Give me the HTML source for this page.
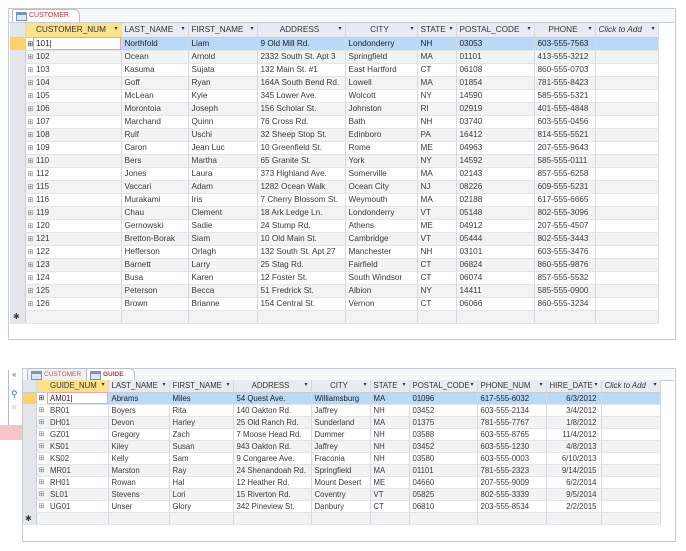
<!DOCTYPE html>
<html><head><meta charset="utf-8"><style>
body{margin:0;width:686px;height:551px;background:#fff;position:relative;overflow:hidden;font-family:"Liberation Sans",sans-serif;}
.frame{position:absolute;border:1px solid #c5cbd3;background:#fff;}
.tabbar{position:absolute;background:#f7f8fa;border-bottom:1px solid #c9ced6;}
.tab{position:absolute;height:12px;font-size:7px;color:#b0363e;line-height:12px;padding-left:16px;padding-right:10px;background:#fff;border:1px solid #b7bec8;border-bottom:none;border-radius:2px 6px 0 0}
.tab i{position:absolute;left:3px;top:2px;width:9px;height:7px;border:1px solid #7d93b5;background:linear-gradient(#7d93b5 0 2px,#dfe7f3 2px)}
table{position:absolute;border-collapse:collapse;table-layout:fixed;font-size:8.2px;color:#3a3a3a}
td,th{padding:0 0 0 3px;white-space:nowrap;overflow:hidden;border-right:1px solid #d6dae0;border-bottom:1px solid #e1e4e8}
th{background:#e8ecf2;font-weight:normal;color:#333;text-align:left;border-bottom:1px solid #c9ced6}
th.s{background:#fbe28c}
th span{float:right;padding-right:3px;font-size:6px}
td.sel{background:#e4e6ea;border-right:1px solid #c9ced6}
td.ex{border-right:none;color:#777;font-size:7px;padding:0 0 0 2px}
tr.alt td{background:#f3f3f3}
tr.alt td.sel{background:#e4e6ea}
tr.cur td{background:#b9d9f6;color:#222}
tr.cur td.sel{background:#fcd36b}
tr.cur td.box{background:#fff;outline:1px solid #f0a0a8;outline-offset:-1px}
tr.cur td.ex{background:#fff}
td.r{text-align:right;padding-right:4px}
</style></head><body>

<div class="frame" style="left:8px;top:8px;width:666px;height:330px"></div>
<div class="tabbar" style="left:9px;top:9px;width:665px;height:13px"></div>
<div class="tab" style="left:12px;top:9px;">CUSTOMER<i></i></div>

<table style="left:10px;top:23px;width:648px">
<colgroup><col style="width:15px"><col style="width:8px"><col style="width:88px"><col style="width:67px"><col style="width:69px"><col style="width:88px"><col style="width:72px"><col style="width:39px"><col style="width:78px"><col style="width:61px"><col style="width:63px"></colgroup>
<tr style="height:14px"><th style="background:#e4e6ea"></th><th class="s" style="border-right:none"></th><th class="s">CUSTOMER_NUM<span>▾</span></th><th>LAST_NAME<span>▾</span></th><th>FIRST_NAME<span>▾</span></th><th style="text-align:center">ADDRESS<span>▾</span></th><th style="text-align:center">CITY<span>▾</span></th><th>STATE<span>▾</span></th><th>POSTAL_CODE<span>▾</span></th><th style="text-align:center">PHONE<span>▾</span></th><th><em>Click to Add</em><span>▾</span></th></tr>
<tr class="cur" style="height:13px"><td class="sel"></td><td class="ex">⊞</td><td class="box">101|</td><td>Northfold</td><td>Liam</td><td>9 Old Mill Rd.</td><td>Londonderry</td><td>NH</td><td>03053</td><td>603-555-7563</td><td></td></tr>
<tr class="alt" style="height:13px"><td class="sel"></td><td class="ex">⊞</td><td>102</td><td>Ocean</td><td>Arnold</td><td>2332 South St. Apt 3</td><td>Springfield</td><td>MA</td><td>01101</td><td>413-555-3212</td><td></td></tr>
<tr style="height:13px"><td class="sel"></td><td class="ex">⊞</td><td>103</td><td>Kasuma</td><td>Sujata</td><td>132 Main St. #1</td><td>East Hartford</td><td>CT</td><td>06108</td><td>860-555-0703</td><td></td></tr>
<tr class="alt" style="height:13px"><td class="sel"></td><td class="ex">⊞</td><td>104</td><td>Goff</td><td>Ryan</td><td>164A South Bend Rd.</td><td>Lowell</td><td>MA</td><td>01854</td><td>781-555-8423</td><td></td></tr>
<tr style="height:13px"><td class="sel"></td><td class="ex">⊞</td><td>105</td><td>McLean</td><td>Kyle</td><td>345 Lower Ave.</td><td>Wolcott</td><td>NY</td><td>14590</td><td>585-555-5321</td><td></td></tr>
<tr class="alt" style="height:13px"><td class="sel"></td><td class="ex">⊞</td><td>106</td><td>Morontoia</td><td>Joseph</td><td>156 Scholar St.</td><td>Johnston</td><td>RI</td><td>02919</td><td>401-555-4848</td><td></td></tr>
<tr style="height:13px"><td class="sel"></td><td class="ex">⊞</td><td>107</td><td>Marchand</td><td>Quinn</td><td>76 Cross Rd.</td><td>Bath</td><td>NH</td><td>03740</td><td>603-555-0456</td><td></td></tr>
<tr class="alt" style="height:13px"><td class="sel"></td><td class="ex">⊞</td><td>108</td><td>Rulf</td><td>Uschi</td><td>32 Sheep Stop St.</td><td>Edinboro</td><td>PA</td><td>16412</td><td>814-555-5521</td><td></td></tr>
<tr style="height:13px"><td class="sel"></td><td class="ex">⊞</td><td>109</td><td>Caron</td><td>Jean Luc</td><td>10 Greenfield St.</td><td>Rome</td><td>ME</td><td>04963</td><td>207-555-9643</td><td></td></tr>
<tr class="alt" style="height:13px"><td class="sel"></td><td class="ex">⊞</td><td>110</td><td>Bers</td><td>Martha</td><td>65 Granite St.</td><td>York</td><td>NY</td><td>14592</td><td>585-555-0111</td><td></td></tr>
<tr style="height:13px"><td class="sel"></td><td class="ex">⊞</td><td>112</td><td>Jones</td><td>Laura</td><td>373 Highland Ave.</td><td>Somerville</td><td>MA</td><td>02143</td><td>857-555-6258</td><td></td></tr>
<tr class="alt" style="height:13px"><td class="sel"></td><td class="ex">⊞</td><td>115</td><td>Vaccari</td><td>Adam</td><td>1282 Ocean Walk</td><td>Ocean City</td><td>NJ</td><td>08226</td><td>609-555-5231</td><td></td></tr>
<tr style="height:13px"><td class="sel"></td><td class="ex">⊞</td><td>116</td><td>Murakami</td><td>Iris</td><td>7 Cherry Blossom St.</td><td>Weymouth</td><td>MA</td><td>02188</td><td>617-555-6665</td><td></td></tr>
<tr class="alt" style="height:13px"><td class="sel"></td><td class="ex">⊞</td><td>119</td><td>Chau</td><td>Clement</td><td>18 Ark Ledge Ln.</td><td>Londonderry</td><td>VT</td><td>05148</td><td>802-555-3096</td><td></td></tr>
<tr style="height:13px"><td class="sel"></td><td class="ex">⊞</td><td>120</td><td>Gernowski</td><td>Sadie</td><td>24 Stump Rd.</td><td>Athens</td><td>ME</td><td>04912</td><td>207-555-4507</td><td></td></tr>
<tr class="alt" style="height:13px"><td class="sel"></td><td class="ex">⊞</td><td>121</td><td>Bretton-Borak</td><td>Siam</td><td>10 Old Main St.</td><td>Cambridge</td><td>VT</td><td>05444</td><td>802-555-3443</td><td></td></tr>
<tr style="height:13px"><td class="sel"></td><td class="ex">⊞</td><td>122</td><td>Hefferson</td><td>Orlagh</td><td>132 South St. Apt 27</td><td>Manchester</td><td>NH</td><td>03101</td><td>603-555-3476</td><td></td></tr>
<tr class="alt" style="height:13px"><td class="sel"></td><td class="ex">⊞</td><td>123</td><td>Barnett</td><td>Larry</td><td>25 Stag Rd.</td><td>Fairfield</td><td>CT</td><td>06824</td><td>860-555-9876</td><td></td></tr>
<tr style="height:13px"><td class="sel"></td><td class="ex">⊞</td><td>124</td><td>Busa</td><td>Karen</td><td>12 Foster St.</td><td>South Windsor</td><td>CT</td><td>06074</td><td>857-555-5532</td><td></td></tr>
<tr class="alt" style="height:13px"><td class="sel"></td><td class="ex">⊞</td><td>125</td><td>Peterson</td><td>Becca</td><td>51 Fredrick St.</td><td>Albion</td><td>NY</td><td>14411</td><td>585-555-0900</td><td></td></tr>
<tr style="height:13px"><td class="sel"></td><td class="ex">⊞</td><td>126</td><td>Brown</td><td>Brianne</td><td>154 Central St.</td><td>Vernon</td><td>CT</td><td>06066</td><td>860-555-3234</td><td></td></tr>
<tr class="alt" style="height:13px"><td class="sel" style="font-size:8px;padding:0 0 0 3px">✱</td><td class="ex"></td><td></td><td></td><td></td><td></td><td></td><td></td><td></td><td></td><td></td></tr>
</table>

<!-- left nav -->
<div style="position:absolute;left:8px;top:370px;width:1px;height:60px;background:#bbb"></div>
<div style="position:absolute;left:12px;top:370px;font-size:8px;color:#555">«</div>
<div style="position:absolute;left:11px;top:389px;font-size:9px;color:#2a6fc0">⚲</div>
<div style="position:absolute;left:11px;top:403px;font-size:7px;color:#666">☆</div>
<div style="position:absolute;left:0;top:425px;width:22px;height:15px;background:#f7c4c8"></div>

<div class="frame" style="left:22px;top:368px;width:652px;height:172px"></div>
<div class="tabbar" style="left:23px;top:369px;width:651px;height:11px"></div>
<div class="tab" style="left:27px;top:368px;height:11px;line-height:11px;font-size:6.5px;color:#c55;background:#eef0f3">CUSTOMER<i></i></div>
<div class="tab" style="left:86px;top:368px;height:11px;line-height:11px;font-size:6.5px;font-weight:bold">GUIDE<i></i></div>

<table style="left:23px;top:380px;width:637px;font-size:7.8px">
<colgroup><col style="width:13px"><col style="width:11px"><col style="width:61px"><col style="width:61px"><col style="width:64px"><col style="width:78px"><col style="width:59px"><col style="width:39px"><col style="width:68px"><col style="width:69px"><col style="width:55px"><col style="width:59px"></colgroup>
<tr style="height:12px"><th style="background:#e4e6ea"></th><th class="s" style="border-right:none"></th><th class="s">GUIDE_NUM<span>▾</span></th><th>LAST_NAME<span>▾</span></th><th>FIRST_NAME<span>▾</span></th><th style="text-align:center">ADDRESS<span>▾</span></th><th style="text-align:center">CITY<span>▾</span></th><th>STATE<span>▾</span></th><th>POSTAL_CODE<span>▾</span></th><th>PHONE_NUM<span>▾</span></th><th>HIRE_DATE<span>▾</span></th><th><em>Click to Add</em><span>▾</span></th></tr>
<tr class="cur" style="height:12px"><td class="sel"></td><td class="ex">⊞</td><td class="box">AM01|</td><td>Abrams</td><td>Miles</td><td>54 Quest Ave.</td><td>Williamsburg</td><td>MA</td><td>01096</td><td>617-555-6032</td><td class="r">6/3/2012</td><td></td></tr>
<tr style="height:12px"><td class="sel"></td><td class="ex">⊞</td><td>BR01</td><td>Boyers</td><td>Rita</td><td>140 Oakton Rd.</td><td>Jaffrey</td><td>NH</td><td>03452</td><td>603-555-2134</td><td class="r">3/4/2012</td><td></td></tr>
<tr class="alt" style="height:12px"><td class="sel"></td><td class="ex">⊞</td><td>DH01</td><td>Devon</td><td>Harley</td><td>25 Old Ranch Rd.</td><td>Sunderland</td><td>MA</td><td>01375</td><td>781-555-7767</td><td class="r">1/8/2012</td><td></td></tr>
<tr style="height:12px"><td class="sel"></td><td class="ex">⊞</td><td>GZ01</td><td>Gregory</td><td>Zach</td><td>7 Moose Head Rd.</td><td>Dummer</td><td>NH</td><td>03588</td><td>603-555-8765</td><td class="r">11/4/2012</td><td></td></tr>
<tr class="alt" style="height:12px"><td class="sel"></td><td class="ex">⊞</td><td>KS01</td><td>Kiley</td><td>Susan</td><td>943 Oakton Rd.</td><td>Jaffrey</td><td>NH</td><td>03452</td><td>603-555-1230</td><td class="r">4/8/2013</td><td></td></tr>
<tr style="height:12px"><td class="sel"></td><td class="ex">⊞</td><td>KS02</td><td>Kelly</td><td>Sam</td><td>9 Congaree Ave.</td><td>Fraconia</td><td>NH</td><td>03580</td><td>603-555-0003</td><td class="r">6/10/2013</td><td></td></tr>
<tr class="alt" style="height:12px"><td class="sel"></td><td class="ex">⊞</td><td>MR01</td><td>Marston</td><td>Ray</td><td>24 Shenandoah Rd.</td><td>Springfield</td><td>MA</td><td>01101</td><td>781-555-2323</td><td class="r">9/14/2015</td><td></td></tr>
<tr style="height:12px"><td class="sel"></td><td class="ex">⊞</td><td>RH01</td><td>Rowan</td><td>Hal</td><td>12 Heather Rd.</td><td>Mount Desert</td><td>ME</td><td>04660</td><td>207-555-9009</td><td class="r">6/2/2014</td><td></td></tr>
<tr class="alt" style="height:12px"><td class="sel"></td><td class="ex">⊞</td><td>SL01</td><td>Stevens</td><td>Lori</td><td>15 Riverton Rd.</td><td>Coventry</td><td>VT</td><td>05825</td><td>802-555-3339</td><td class="r">9/5/2014</td><td></td></tr>
<tr style="height:12px"><td class="sel"></td><td class="ex">⊞</td><td>UG01</td><td>Unser</td><td>Glory</td><td>342 Pineview St.</td><td>Danbury</td><td>CT</td><td>06810</td><td>203-555-8534</td><td class="r">2/2/2015</td><td></td></tr>
<tr class="alt" style="height:12px"><td class="sel" style="padding:0 0 0 2px">✱</td><td class="ex"></td><td></td><td></td><td></td><td></td><td></td><td></td><td></td><td></td><td></td><td></td></tr>
</table>
</body></html>
